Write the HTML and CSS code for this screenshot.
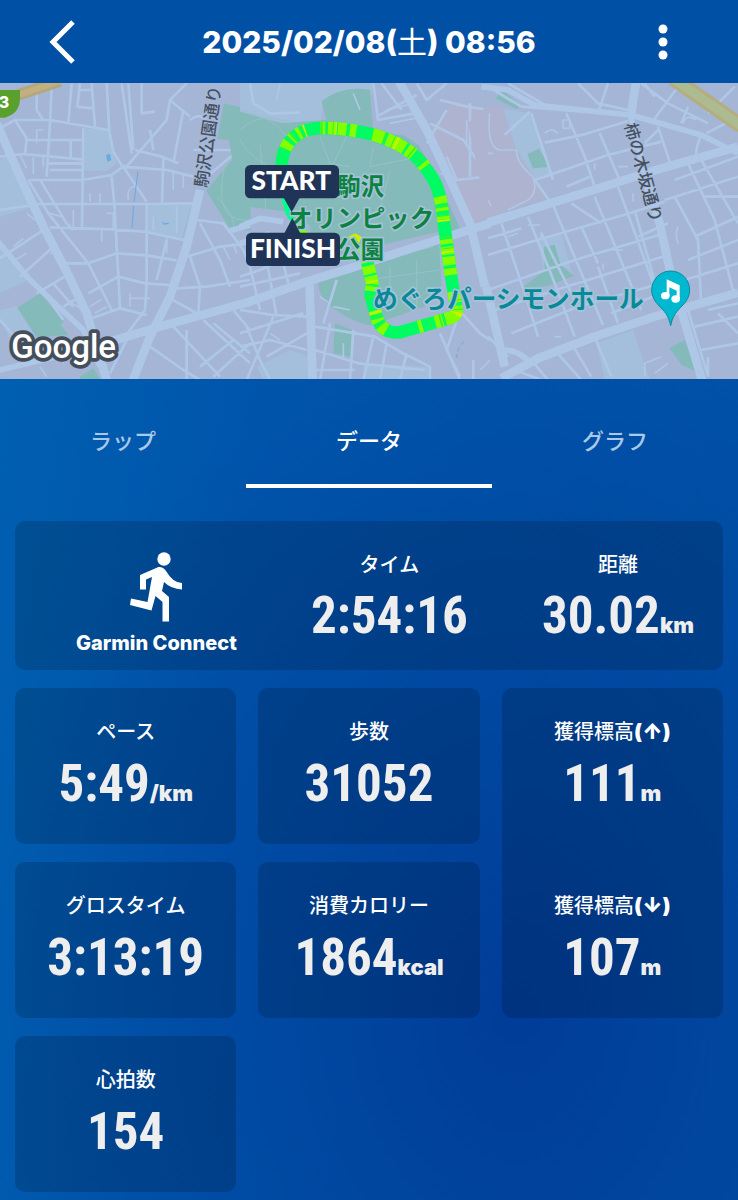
FILE: index.html
```html
<!DOCTYPE html>
<html lang="ja">
<head>
    <meta charset="UTF-8">
    <title>2025/02/08(土) 08:56</title>
    <meta name="viewport" content="width=device-width, initial-scale=1.0">
    <link rel="stylesheet" href="styles.css">
</head>
<body>
<header class="topbar">
    <button class="icon-btn" aria-label="戻る">
        <svg viewBox="0 0 30 44" width="30" height="44" fill="none" stroke="#fff" stroke-width="5">
            <path d="M27 2 7 22l20 20"/>
        </svg>
    </button>
    <h1 class="title">2025/02/08(<span class="day">土</span>) 08:56</h1>
    <button class="icon-btn" aria-label="メニュー">
        <svg viewBox="0 0 30 44" width="30" height="44" fill="#fff">
            <circle cx="15" cy="9" r="4.5"/>
            <circle cx="15" cy="22" r="4.5"/>
            <circle cx="15" cy="35" r="4.5"/>
        </svg>
    </button>
</header>

<svg class="map" viewBox="0 9 2214 888" role="img" aria-label="コースマップ">
    <rect y="9" width="2214" height="888" fill="#a4b5d6"/>

    <!-- west -->
    <g>
        <path class="block" d="M0 240 28 228 100 380 0 410zM0 500 85 600 0 640zM255 145 322 150 350 250 320 272 252 272zM445 375h130l-30 100-100-20zM0 690l50-12 60 100-50 60-60-120z"/>
        <path class="park" d="M52 683 120 640 192 722 182 735 205 765 110 772zM240 890l40-25 20 32h-60zM672 70l80 20v360l-58 2-75-120q50-60 100-120l-2-30-65-5z"/>
        <path class="path" d="M750 150q-80 60-85 170t85 100M680 90q50 0 70 20M690 130q30-40 60-30M650 350q60 60 50 100"/>
        <path class="minor" d="M0 145 45 120 150 120 325 150M45 120 80 175 75 225M0 230l70-8 175 16M155 20 150 130 140 290M80 180h165M110 20v70l20 30M215 10l-10 120M212 180v50M320 10l8 145 12 60 30 50M365 10l30 210M240 10l-8 70 45 5M275 10l10 130M235 30h42M85 300h160l90-15 40-30M250 145l-4 295M145 250h100M150 270h95M100 372h340l140-2M335 290l8 80 8 150 4 65 5 100M150 442l190 6 100 8 130 28M85 300l60 100 120 150 70 140M120 300l80 130 20 20M190 550h75l85-30 90 6 90 15M265 640 355 590l80 20 90 6M260 720l100-35 80 20M440 370v240l-5 80-60 80M370 260l70 105M375 265 500 120 510 60 560 10M370 260l130 10 80 20M405 210l80 20 50 20M385 10l15 200M425 10v90l40-5M450 150l10 60M490 230l-4 140M550 90l-30 160M510 60l60 50M570 120q40-30 60 20M580 210h120M620 290l90-75M590 420l80 10 60 80 20 50M560 530l100-30 90-10M570 530l30 90-5 80M600 430l60 110 30 80M510 655l90 50M530 625l90-5 130-20M500 480l-30 120M0 390l100-15M0 535 130 450M60 590 160 500M110 640l100-60M140 650l50 70M160 610l60 70M190 680l50-30M0 720l70 80M380 780l-50 100M450 800l100 70 50 30M520 740l140 150M560 750v150M610 720l140 130M640 730l110 90M700 690l50 60M600 860l100-80M640 890l110-100"/>
        <path class="tiny" d="M110 190v-40l20 0M60 225l20 40M100 232v50M130 232v30M40 500l30-25M45 540l35-20M80 400l25 20M150 400l35 10M150 520q20 0 10-20M270 365v-25M300 340v35M320 400h20v50M305 450v35M220 390v50M270 680l35-22M285 700l35-20M390 655h60M390 640v40M385 360q-5-40 20-40M460 410v40M530 380v80M500 470v50M670 500l20 40M700 490l10 30M190 800v50M120 860l20 30M200 660l50 30M520 270v60M550 280v45"/>
        <path class="main" d="M-10 130 60 290 130 440 200 575 260 700 320 900M600 330 560 500 510 650 450 770 395 910M330 785 480 740 750 665"/>
        <path class="mid" d="M-10 480 90 600 250 750 300 860M-10 872 150 835 340 785M690 452 750 435"/>
        <path d="M318 225l12-4 4 20-12 4zM485 422l8 8 14-2-2 4-14 2z" fill="#66abe6"/>
        <path d="M414 275l-12 90M401 378l-5 66" stroke="#66abe6" stroke-width="3"/>
        <path d="M30 53 180 3" stroke="#b5a77d" stroke-width="34"/>
        <path d="M30 53 180 3" stroke="#c2b080" stroke-width="18"/>
    </g>

    <!-- centre -->
    <g transform="translate(720)">
        <path class="campus" d="M560 150 650 60 750 90v330l-60 10z"/>
        <path class="block" d="M0 10h400l-10 50-140-5-10 100-240-60zM50 860l100-50 60 20v70H70zM370 850l200 10v40H370z"/>
        <path class="park" d="M-50 80 120 130l140-10-15-55q60-50 145-35l10 130 90 5 45 30 45 75 85 185-180 60-250 80q-5 60 60 100t100 40l170-60 40-60-10-160-300 70-80 12-5-100-50-40-160-20zM285 730l50 20v80l-55-10z"/>
        <path class="path" d="M0 90q100 20 140 80M0 150q60-60 150-20M0 180q40 70 120 90M240 170l30 80 60 10M330 150l-60 120M400 200l-10 60 150-30M60 190l20 230M450 270l-30 120M330 560l250-60M450 560v100M530 540v140M380 600l220-30"/>
        <path class="minor" d="M30 10l10 60 50 30 90-2M400 10l14 110 110-20M410 110 530 45M425 10l60 80M530 10 560 60l60-50M600 60l80 20 70 10M620 90l-60 100M570 130l100 50 60 90M690 70v220M620 230l30 70 90-10M0 590l60-20 110-50M0 620l180-40M30 560l30 130M80 540l30 170M130 550l20 80M0 690l100 15 100 5M0 760l190-60M100 710l-80 190M20 740l40 100 30 60M0 800l90-20 110 30M80 830l120-70M290 600l-40 130M225 740l180 30 100 60M270 730l-30 170M340 750l-10 150M400 770l-30 130M225 810l130 40 200 20M440 790l-20 110M500 820l-20 80M225 870h120M500 825l70 35v40M648 680l72 80 30 20M600 760l60 140M650 720l-30 90 40 80M700 840v60"/>
        <path class="tiny" d="M120 10l-10 50M340 40l20 50M440 90l80-20M450 130l100-20M600 280l50 20M680 200v-80M120 620h40M50 650h50M90 760l30 20M240 650l30 20M280 680l50 10M310 790v50M720 870l30-30"/>
        <path class="main" d="M0 675 200 605 330 565 560 490 750 430M475 0 560 150 640 320 690 430 735 620M208 600 218 900"/>
        <path class="mid" d="M0 440 60 415 130 425M0 490 90 460"/>
        <path d="M672 785q-20 15-22 50" fill="none" stroke="#66abe6" stroke-width="3" stroke-dasharray="14 8"/>
    </g>

    <!-- east -->
    <g transform="translate(1464)">
        <path class="campus" d="M-60 130 0 75 50 90 110 230l65 120L0 415z"/>
        <path class="block" d="M45 85l80 15 40 90 20 100-40 10-60-90zM150 480l70-20 35 130-80 20zM325 790l110-40 50 147H350zM600 800l30 60-60-40z"/>
        <path class="park" d="M22 55 45 32l55 45-15 10zM118 222l35-16 32 55-50 4zM168 500l32-6 18 60 40 34-80 30-80 8 72-55zM545 805l45-25 36 95-45-20z"/>
        <path class="minor" d="M0 20l100 60 250 20M60 10l120 70M130 100l65 200M125 95l-75 70M170 188l120-25 130-40M235 100l55 130 30 90M270 10l60 60 90 20M360 10l-30 90M335 160l60 140M140 300l220-75 160-40M470 10l30 40M510 150l-40 40M460 10l80 60 120 60M570 20l-80 110M510 140l40 120M600 80l-20 50M640 165q-20 40-15 80M740 20l-80 80M655 160l95-50M140 300l50 70M235 320l70-30M195 375l150 360M250 370l90 60M320 350l140 340M390 320l120 330M0 525l130-40 310-90 90-30M0 475l100-30M40 430l80 240 30 100M120 410l80 200 60 160M0 630l260-90 270-80M20 690l200-65 320-100M70 760l200-80 250-70M160 460l100 200M280 440l50 110M440 390l70 250M450 470l90-40M560 350l70 130 10 200M600 250l80 170 60 230M640 240l110 190M530 360l220-70M560 300l190-70M620 470l130-60M600 540l150-60M590 600l160-50M650 350h100M600 690l60 200M660 690l90-20M620 740l130-30M640 810l110-20M690 700l60 60M660 830v60M200 810l80 90M250 790l60 100M320 770l50 120M130 840l50 60M80 870l80 30M0 770l60 60M330 560l60 170M370 700l150-60"/>
        <path class="tiny" d="M5 100q-10 100 30 110h50q0 40 50 80 20 60-35 80l-40 20M0 220h15M0 360l10 20M60 470l30-10M120 435h35M160 455v20M170 160q20-20 40 0M225 120h20v25h-20zM320 250v20M390 260h30M370 510h35M345 550v20M200 770h20M435 340v25M570 440q-10 25 0 50M585 130q10-30 40-10M470 890v-40l50-20M500 880l40-30"/>
        <path class="main" d="M0 428 300 335 520 265 750 200M445 0 428 110M455 240 515 430 550 590 645 910M40 895 150 835 320 770 500 710 750 638M-5 620 50 860"/>
        <path class="mid" d="M-20 20 60 30 140 75 428 105 640 165 750 220M428 110 460 240M50 810q60 5 80 50"/>
        <path d="M555 -5 760 138" stroke="#b5ad7d" stroke-width="46"/>
        <path d="M555 -5 760 138" stroke="#adbb91" stroke-width="28"/>
    </g>

    <!-- route 3 shield -->
    <path d="M-30 30h90v25q0 45-45 58h-45z" fill="#5aa02c"/>
    <text class="shield-no" x="-4" y="83">3</text>

    <!-- street names -->
    <text class="street" font-size="51" transform="translate(621 324) rotate(-82)">駒沢公園通り</text>
    <text class="street" font-size="51" transform="translate(1873 134) rotate(75)">柿の木坂通り</text>

    <!-- running course, the colour shows the pace -->
    <defs>
        <path id="loop" d="M125 275C120 200 160 145 245 144 300 143 350 152 400 164 480 188 530 220 565 275 600 320 605 370 612 430L632 580 648 680Q655 705 632 713L480 757Q430 762 412 718L392 645 397 610 380 540"/>
    </defs>
    <g transform="translate(720)" fill="none">
        <g stroke-width="38">
            <use href="#loop" stroke="#00fc62"/>
            <use href="#loop" class="pace-fast"/>
            <use href="#loop" class="pace-mid"/>
            <use href="#loop" class="pace-slow"/>
        </g>
        <path d="M132 350 145 400 165 430" stroke="#00ff8c" stroke-width="16"/>
        <path d="M165 415 178 450 200 460" stroke="#7dff00" stroke-width="14"/>
        <path d="M325 470l20-10 20 10-10 25z" fill="#c8f000"/>
        <path d="M352 490 375 545" stroke="#7dff00" stroke-width="10"/>
    </g>

    <!-- places -->
    <g class="place">
        <text x="1012" y="345" font-size="70">駒沢</text>
        <text x="864" y="441" font-size="73">オリンピック</text>
        <text x="1012" y="535" font-size="70">公園</text>
    </g>
    <text class="venue" x="1119" y="684" font-size="74">めぐろパーシモンホール</text>

    <path d="M2012 737c-6-32-20-44-34-59q-23-22-23-48a57 57 0 0 1 114 0q0 26-23 48c-14 15-28 27-34 59z" fill="#00b8d0" stroke="#078b9f" stroke-width="3"/>
    <g fill="#fff">
        <ellipse cx="1996" cy="647" rx="13" ry="11"/>
        <ellipse cx="2027" cy="657" rx="13" ry="11"/>
        <path d="M2000 598l39 18v42h-9v-26l-22-10v26h-8z"/>
    </g>

    <!-- start and finish flags -->
    <g fill="#1f3457">
        <rect x="735" y="255" width="282" height="100" rx="16"/>
        <path d="M851 353h48l-24 43z"/>
        <rect x="738" y="458" width="282" height="100" rx="16"/>
        <path d="M853 460h48l-24-46z"/>
    </g>
    <text class="flag" x="874" y="331">START</text>
    <text class="flag" x="879" y="534">FINISH</text>

    <text class="google" x="34" y="833">Google</text>
</svg>

<main class="content">
    <nav class="tabs">
        <button class="tab">ラップ</button>
        <button class="tab active">データ</button>
        <button class="tab">グラフ</button>
    </nav>

    <section class="card summary">
        <div class="source">
            <svg viewBox="0 0 54 72" width="54" height="72" fill="#fff">
                <circle cx="35" cy="8" r="6.7"/>
                <path d="M29.500 16Q34 15.500 37 20q7 12 16 12v6.500q-11-.5-18-7.500l-2 9 7 6v24.500h-6.500V51l-7-6-4 14.500L1 54l1-6.500 16.500 3.500L23 26l-6 2.500v10h-6V24z"/>
            </svg>
            <span class="source-name">Garmin Connect</span>
        </div>
        <div class="stat">
            <span class="label">タイム</span>
            <span class="value">2:54:16</span>
        </div>
        <div class="stat">
            <span class="label">距離</span>
            <span class="value">30.02<small>km</small></span>
        </div>
    </section>

    <section class="grid">
        <div class="card stat">
            <span class="label">ペース</span>
            <span class="value">5:49<small>/km</small></span>
        </div>
        <div class="card stat">
            <span class="label">歩数</span>
            <span class="value">31052</span>
        </div>
        <div class="card elevation">
            <div class="stat">
                <span class="label">獲得標高<b>(↑)</b></span>
                <span class="value">111<small>m</small></span>
            </div>
            <div class="stat">
                <span class="label">獲得標高<b>(↓)</b></span>
                <span class="value">107<small>m</small></span>
            </div>
        </div>
        <div class="card stat">
            <span class="label">グロスタイム</span>
            <span class="value">3:13:19</span>
        </div>
        <div class="card stat">
            <span class="label">消費カロリー</span>
            <span class="value">1864<small>kcal</small></span>
        </div>
        <div class="card stat">
            <span class="label">心拍数</span>
            <span class="value">154</span>
        </div>
    </section>
</main>
</body>
</html>
```
FILE: styles.css
```css
:root {
    --bar: #0050a6;
    --card: rgba(0,0,0,0.16);
    --value: #eee;
    --road: #afc7e6;
    --radius: 10px;
}
* {
    box-sizing: border-box;
}
body {
    margin: 0;
    min-height: 100vh;
    display: flex;
    flex-direction: column;
    background: var(--bar);
    color: #fff;
    font-family: Inter, "Noto Sans CJK JP", sans-serif;
}
button {
    border: none;
    background: none;
    color: inherit;
    font: inherit;
    padding: 0;
    cursor: pointer;
}

/* header */
.topbar {
    display: flex;
    align-items: center;
    justify-content: space-between;
    height: 83px;
    padding: 0 60px 0 46px;
}
.icon-btn {
    display: flex;
}
.title {
    flex: 1;
    margin: 0;
    padding-left: 14px;
    font-size: 30px;
    font-weight: 800;
    line-height: 40px;
    text-align: center;
}
.title .day {
    font-weight: 400;
}

/* map */
.map {
    display: block;
    width: 100%;
}
.map .block { fill: #a3bfdb; }
.map .campus { fill: #aeb3cf; }
.map .park { fill: #84baba; }
.map .main,
.map .mid,
.map .minor,
.map .tiny {
    fill: none;
    stroke: var(--road);
    stroke-linejoin: round;
}
.map .main { stroke-width: 26; }
.map .mid { stroke-width: 17; }
.map .minor { stroke-width: 8; }
.map .tiny { stroke-width: 5; }
.map .path {
    fill: none;
    stroke: #96c2c8;
    stroke-width: 3;
}
.pace-fast {
    stroke: #84ff00;
    stroke-dasharray: 0 70 22 12 10 14 12 60 14 8 24 6 26 10 20 50 34 10 60 8 24 40 12 30;
}
.pace-mid {
    stroke: #37f22a;
    stroke-dasharray: 0 110 4 24 3 60 5 30 3 44;
}
.pace-slow {
    stroke: #cdf000;
    stroke-dasharray: 0 150 5 90 4 180 8 130;
}
.street {
    font-weight: 500;
    fill: #475060;
    stroke: #a6bbdb;
    stroke-width: 4;
    paint-order: stroke;
}
.place,
.venue {
    font-weight: 700;
    stroke: #a5c2d8;
    stroke-width: 10;
    stroke-linejoin: round;
    paint-order: stroke;
}
.place { fill: #0b823f; }
.venue { fill: #08899a; }
.shield-no {
    font-size: 48px;
    font-weight: 800;
    fill: #fff;
}
.flag {
    font-family: Lato, sans-serif;
    font-size: 79px;
    font-weight: 900;
    fill: #fff;
    text-anchor: middle;
}
.google {
    font-family: Roboto, sans-serif;
    font-size: 99px;
    font-weight: 500;
    fill: #fff;
    stroke: #454f5c;
    stroke-width: 22;
    stroke-linejoin: round;
    paint-order: stroke;
}

/* content */
.content {
    flex: 1;
    padding-bottom: 8px;
    background:
        radial-gradient(ellipse 70% 85% at 70% 77%, rgba(0,58,150,0.9) 0%, rgba(0,58,150,0.5) 40%, rgba(0,58,150,0) 100%),
        linear-gradient(100deg, #005fb1 0%, #0055ab 30%, #0050a6 100%);
}
.tabs {
    display: grid;
    grid-template-columns: repeat(3, 1fr);
    margin-bottom: 33px;
}
.tab {
    height: 109px;
    padding-top: 15px;
    border-bottom: 4px solid transparent;
    font-size: 22px;
    font-weight: 500;
    color: #a9c9e8;
}
.tab.active {
    color: #fff;
    border-color: #fff;
}
.card {
    background: var(--card);
    border-radius: var(--radius);
}
.summary {
    display: flex;
    justify-content: space-between;
    margin: 0 15px 18px;
    padding: 30px 29px 14px 61px;
}
.source {
    display: flex;
    flex-direction: column;
    align-items: center;
    gap: 7px;
}
.source-name {
    font-size: 20px;
    font-weight: 800;
    line-height: 26px;
}
.grid {
    display: grid;
    grid-template-columns: repeat(3, 1fr);
    grid-auto-rows: 156px;
    gap: 18px 22px;
    margin: 0 15px;
}
.stat {
    display: flex;
    flex-direction: column;
    align-items: center;
}
.grid .stat {
    padding-top: 30px;
}
.label {
    font-size: 20px;
    font-weight: 500;
    line-height: 28px;
}
.label b {
    font-size: 21px;
    font-weight: 900;
}
.value {
    color: var(--value);
    font-family: "Roboto Condensed", Roboto, sans-serif;
    font-size: 51px;
    font-weight: 700;
    line-height: 60px;
    margin-top: 8px;
}
.summary .value {
    margin-top: 7px;
}
.value small {
    font-family: Inter, sans-serif;
    font-size: 22px;
    font-weight: 900;
}
.elevation {
    grid-row: span 2;
    display: grid;
    grid-template-rows: 1fr 1fr;
    gap: 18px;
}
```
